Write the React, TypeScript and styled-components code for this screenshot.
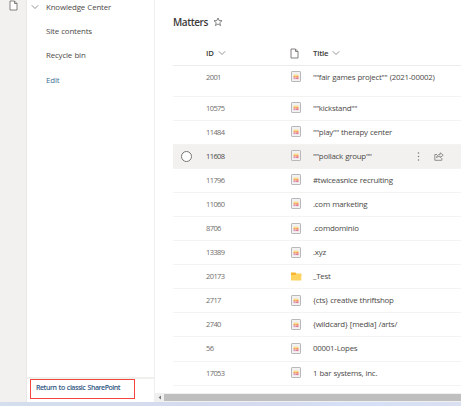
import React from 'react';
import styled, { createGlobalStyle } from 'styled-components';

const GlobalStyle = createGlobalStyle`
  * { box-sizing: border-box; }
  body { margin: 0; background: #fff; overflow: hidden; }
`;

const Page = styled.div`
  width: 461px;
  height: 406px;
  display: flex;
  flex-direction: column;
  overflow: hidden;
  font-family: 'Open Sans', 'Noto Sans', sans-serif;
  font-size: 7.9px;
  color: #4c4a48;
  white-space: nowrap;
`;

const Body = styled.div`
  flex: 1;
  min-height: 0;
  display: flex;
`;

const Rail = styled.aside`
  width: 27px;
  flex: none;
  padding-left: 9px;
  background: #f2f1ef;
  border-right: 1px solid #e9e8e7;
  svg { display: block; }
`;

const Sidebar = styled.nav`
  width: 128px;
  flex: none;
  display: flex;
  flex-direction: column;
  border-right: 1px solid #efefef;
`;

const NavList = styled.div`
  flex: 1;
`;

const NavItem = styled.div<{ $first?: boolean; $link?: boolean }>`
  height: ${p => (p.$first ? 19 : 24.7)}px;
  display: flex;
  align-items: center;
  gap: 7px;
  padding-left: ${p => (p.$first ? 4 : 19)}px;
  padding-bottom: ${p => (p.$first ? 6 : 1.5)}px;
  letter-spacing: -0.16px;
  word-spacing: 0.4px;
  color: ${p => (p.$link ? '#426f98' : '#4c4a48')};
`;

const NavFooter = styled.div`
  height: 25px;
  border-top: 2px solid #efefee;
  padding: 0 0 0 3px;
`;

const Highlight = styled.div`
  width: 105px;
  height: 20px;
  border: 1px solid #f4453f;
  padding: 0 0 4px 5px;
  display: flex;
  align-items: center;
`;

const ClassicLink = styled.a`
  color: #2f5583;
  font-size: 7px;
  font-weight: 600;
  letter-spacing: -0.46px;
  word-spacing: 0.8px;
`;

const Main = styled.main`
  flex: 1;
  min-width: 0;
  display: flex;
  flex-direction: column;
`;

const ListArea = styled.section`
  flex: 1;
  padding-left: 18px;
  min-height: 0;
`;

const Heading = styled.h1`
  margin: 0;
  height: 42px;
  padding-top: 2px;
  display: flex;
  align-items: center;
  gap: 5px;
  font-size: 10px;
  font-weight: 600;
  letter-spacing: -0.42px;
  color: #3b3a39;
`;

const Row = styled.div<{ $height: number; $active?: boolean; $head?: boolean }>`
  height: ${p => p.$height}px;
  display: grid;
  grid-template-columns: 33px 84px 23px 100px 1fr;
  align-items: center;
  border-bottom: 1px solid ${p => (p.$head ? '#ececeb' : '#f4f3f2')};
  background: ${p => (p.$active ? '#f2f1f0' : 'transparent')};
  svg { display: block; }
`;

const HeadCell = styled.div`
  display: flex;
  align-items: center;
  gap: 4px;
  padding-bottom: 1px;
  font-size: 7.8px;
  font-weight: 600;
  letter-spacing: -0.2px;
  color: #3d3b39;
`;

const IdCell = styled.div<{ $active?: boolean; $tall?: boolean }>`
  font-size: 7.5px;
  letter-spacing: -0.6px;
  padding-bottom: ${p => (p.$tall ? 8 : 1)}px;
  color: ${p => (p.$active ? '#4b4a48' : '#6f6d6b')};
`;

const IconCell = styled.div<{ $tall?: boolean }>`
  padding-bottom: ${p => (p.$tall ? 7 : 0)}px;
  padding-left: 1px;
`;

const TitleCell = styled.div<{ $tall?: boolean }>`
  padding-bottom: ${p => (p.$tall ? 8 : 1)}px;
  letter-spacing: -0.24px;
  word-spacing: 0.4px;
`;

const Actions = styled.div`
  display: flex;
  align-items: center;
  gap: 14px;
  padding-left: 4px;
`;

const Radio = styled.div`
  width: 11px;
  height: 11px;
  margin-left: 8px;
  border: 1px solid #777573;
  border-radius: 50%;
  background: #fff;
`;

const ScrollBar = styled.div`
  height: 9px;
  flex: none;
  display: flex;
  align-items: center;
  background: #f0f0f0;
  svg { display: block; }
`;

const Arrow = styled.div`
  width: 9px;
  padding-left: 3px;
`;

const Thumb = styled.div`
  flex: 1;
  height: 7px;
  background: #bfbfbf;
`;

const Taskbar = styled.div`
  height: 4px;
  flex: none;
  background: linear-gradient(90deg, #d4deec, #d5daf0 55%, #d5e0f6 80%, #dadff1);
`;

const Chevron = () => (
  <svg width="8" height="8" viewBox="0 0 8 8" fill="none" stroke="#777" strokeWidth=".8">
    <path d="M.8 2.3 4 5.5l3.2-3.2" />
  </svg>
);

const DocumentIcon = () => (
  <svg width="9" height="11" viewBox="0 0 9 11" fill="#fff" stroke="#777573" strokeWidth=".9" strokeLinejoin="round">
    <path d="M1 1h4.5L8 3.5V10H1ZM5.5 1v2.5H8" />
  </svg>
);

const ItemIcon = () => (
  <svg width="10" height="12" viewBox="0 0 10 12">
    <rect x=".5" y=".5" width="9" height="10" rx=".6" fill="#f2f1f3" stroke="#b9b7b8" />
    <path d="M2.5 3.6h5v1.5h-5z" fill="#fbdc86" />
    <path d="M2.5 5h2.2v1.6H2.5z" fill="#f5a05d" />
    <path d="M5.2 5h2.3v1.6H5.2z" fill="#f3935f" />
    <path d="M2.5 6.6h2.2v1.5H2.5z" fill="#dc92b5" />
    <path d="M5.2 6.6h2.3v1.5H5.2z" fill="#e56e87" />
  </svg>
);

const FolderIcon = () => (
  <svg width="11" height="9" viewBox="0 0 11 9">
    <path d="M0 .5h4.5l1 1.2H10.3v2H0z" fill="#f5b52c" />
    <path d="M0 3h4.2l1.2-1.2h4.9V8.5H0z" fill="#ffd35f" />
  </svg>
);

const Star = () => (
  <svg width="10" height="10" viewBox="0 0 9 9" fill="none" stroke="#555" strokeWidth=".65">
    <path d="m4.5.9 1 2.3 2.6.2-2 1.7.7 2.6-2.3-1.4-2.3 1.4.7-2.6-2-1.7 2.6-.2Z" />
  </svg>
);

const More = () => (
  <svg width="3" height="9" viewBox="0 0 3 9" fill="#777">
    <circle cx="1.5" cy="1" r=".75" />
    <circle cx="1.5" cy="4.5" r=".75" />
    <circle cx="1.5" cy="8" r=".75" />
  </svg>
);

const Share = () => (
  <svg width="10" height="9" viewBox="0 0 10 9" fill="none" stroke="#777" strokeWidth=".8">
    <path d="M3 2.5H.8v5.8h7V6" />
    <path d="M6.2.8 9.2 3.2 6.2 5.6V4.2C4.4 4.2 3.4 4.7 2.6 5.8 2.8 3.7 4 2.4 6.2 2.3Z" />
  </svg>
);

type Item = { id: string; title: string; folder?: boolean; active?: boolean };

const items: Item[] = [
  { id: '2001', title: '""fair games project"" (2021-00002)' },
  { id: '10575', title: '""kickstand""' },
  { id: '11484', title: '""play"" therapy center' },
  { id: '11608', title: '""pollack group""', active: true },
  { id: '11796', title: '#twiceasnice recruiting' },
  { id: '11060', title: '.com marketing' },
  { id: '8706', title: '.comdominio' },
  { id: '13389', title: '.xyz' },
  { id: '20173', title: '_Test', folder: true },
  { id: '2717', title: '{cts} creative thriftshop' },
  { id: '2740', title: '{wildcard} [media] /arts/' },
  { id: '56', title: '00001-Lopes' },
  { id: '17053', title: '1 bar systems, inc.' },
];

export default function App() {
  return (
    <Page>
      <GlobalStyle />
      <Body>
        <Rail><DocumentIcon /></Rail>
        <Sidebar>
          <NavList>
            <NavItem $first><Chevron />Knowledge Center</NavItem>
            <NavItem>Site contents</NavItem>
            <NavItem>Recycle bin</NavItem>
            <NavItem $link>Edit</NavItem>
          </NavList>
          <NavFooter>
            <Highlight><ClassicLink>Return to classic SharePoint</ClassicLink></Highlight>
          </NavFooter>
        </Sidebar>
        <Main>
          <ListArea>
            <Heading>Matters <Star /></Heading>
            <Row $height={24} $head>
              <span />
              <HeadCell>ID <Chevron /></HeadCell>
              <DocumentIcon />
              <HeadCell>Title <Chevron /></HeadCell>
            </Row>
            {items.map((item, i) => (
              <Row key={item.id} $height={i === 0 ? 30.5 : 24.1} $active={item.active}>
                <span>{item.active && <Radio />}</span>
                <IdCell $active={item.active} $tall={i === 0}>{item.id}</IdCell>
                <IconCell $tall={i === 0}>{item.folder ? <FolderIcon /> : <ItemIcon />}</IconCell>
                <TitleCell $tall={i === 0}>{item.title}</TitleCell>
                {item.active && <Actions><More /><Share /></Actions>}
              </Row>
            ))}
          </ListArea>
          <ScrollBar>
            <Arrow>
              <svg width="3" height="5" viewBox="0 0 3 5"><path d="M3 .5v4L.5 2.5Z" fill="#777" /></svg>
            </Arrow>
            <Thumb />
          </ScrollBar>
        </Main>
      </Body>
      <Taskbar />
    </Page>
  );
}
